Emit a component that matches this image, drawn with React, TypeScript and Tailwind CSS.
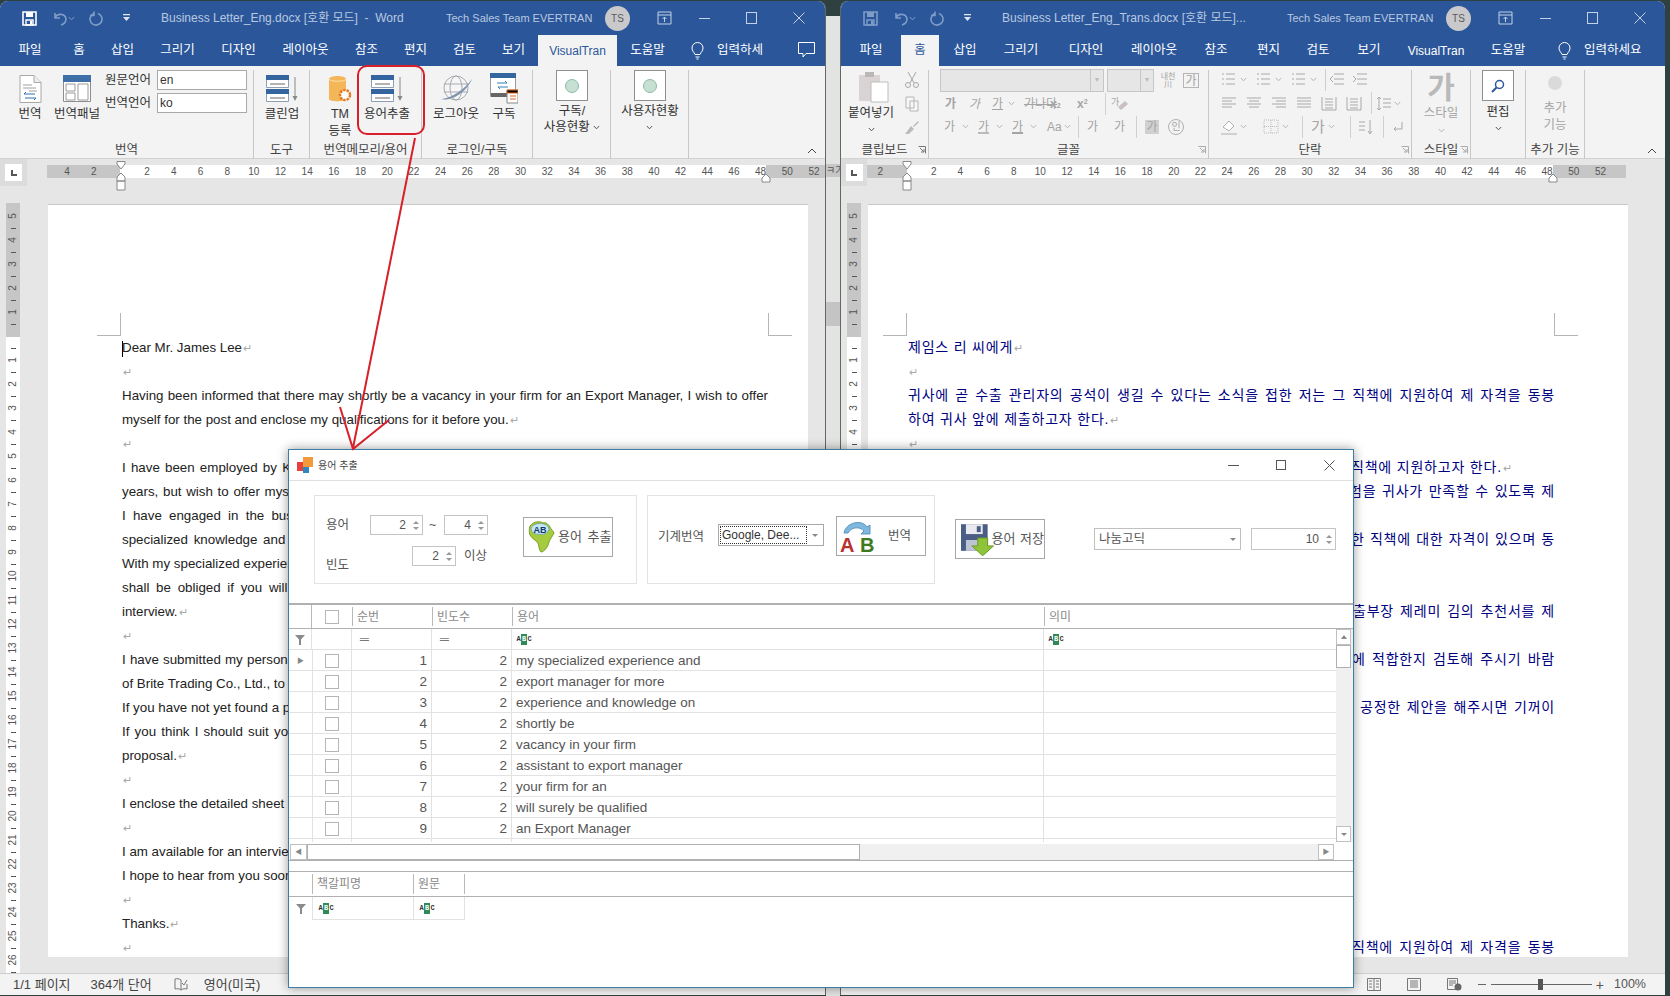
import React from "react";

const Chev = ({ c = "#555" }: { c?: string }) => (
  <svg width="7" height="5" viewBox="0 0 7 5" className="inline-block shrink-0"><path d="M.8 1 3.5 3.8 6.2 1" fill="none" stroke={c} strokeWidth="1" /></svg>
);

const SaveIcon = ({ c }: { c: string }) => (
  <svg width="15" height="15" viewBox="0 0 15 15"><path d="M1 1h13v13H1z" fill="none" stroke={c} strokeWidth="1.6" /><path d="M4 1h7v5H4z" fill={c} /><path d="M4 9h7v5H4z" fill="none" stroke={c} strokeWidth="1.4" /><path d="M8 10h2v3H8z" fill={c} /></svg>
);

function TitleBar({ title, save, titleW }: { title: string; save: string; titleW: string }) {
  const faint = "#7f9cc7";
  return (
    <div className="flex h-[34px] shrink-0 items-center text-[12px] text-[#b9c8e0]">
      <div className="flex w-[161px] shrink-0 items-center pl-[22px]">
        <SaveIcon c={save} />
        <svg className="ml-[15px]" width="16" height="15" viewBox="0 0 16 15"><path d="M3 7c2-5 10-5 11 1 0 3-2 5-5 6M3 2v5h5" fill="none" stroke={faint} strokeWidth="1.6" /></svg>
        <Chev c={faint} />
        <svg className="ml-[14px]" width="15" height="15" viewBox="0 0 15 15"><path d="M9 2.5a6 6 0 1 1-4.500.2M5 .5v4H1" fill="none" stroke={faint} strokeWidth="1.6" /></svg>
        <svg className="ml-[19px]" width="7" height="8" viewBox="0 0 7 8"><path d="M0 0h7v1.2H0zM0 3h7L3.500 7z" fill="#dfe6f2" /></svg>
      </div>
      <div className={`${titleW} shrink-0 whitespace-pre`}>{title}</div>
      <div className="w-[159px] shrink-0 whitespace-nowrap text-[11px]">Tech Sales Team EVERTRAN</div>
      <div className="flex h-[25px] w-[25px] shrink-0 items-center justify-center rounded-full bg-[#c9c9cc] text-[10px] text-[#5a5a5a]">TS</div>
      <svg className="ml-[27px]" width="15" height="14" viewBox="0 0 15 14"><path d="M1 1h13v12H1zM1 4h13M7.500 11V6M5.500 8l2-2 2 2" fill="none" stroke="#c4d1e6" /></svg>
      <div className="ml-[27px] h-px w-[11px] bg-[#c4d1e6]" />
      <div className="ml-[36px] h-[12px] w-[11px] border border-[#c4d1e6]" />
      <svg className="ml-[36px]" width="12" height="12" viewBox="0 0 12 12"><path d="M.5.5l11 11M11.500.5l-11 11" stroke="#c4d1e6" /></svg>
    </div>
  );
}

function Tabs({ tabs, active, hint, hintW, comment }: { tabs: [string, string][]; active: string; hint: string; hintW: string; comment?: boolean }) {
  return (
    <div className="flex h-[31px] shrink-0 text-[12.5px] text-white">
      {tabs.map(([t, w]) => (
        <div key={t} className={`${w} flex shrink-0 items-center justify-center ${t === "VisualTran" ? "text-[12px]" : ""} ${t === active ? "bg-[#f3f3f3] text-[#2b579a]" : ""}`}>{t}</div>
      ))}
      <div className={`${hintW} flex shrink-0 items-center justify-center`}>
        <svg width="13" height="18" viewBox="0 0 13 18"><path d="M4 12.500C3 10 1 9 1 6a5.500 5.500 0 0 1 11 0c0 3-2 4-3 6.500zM4.500 15h4M5.500 17h2" fill="none" stroke="#fff" /></svg>
        <span className="ml-[13px] whitespace-nowrap">{hint}</span>
      </div>
      {comment && (
        <svg className="ml-[10px] mt-[7px] shrink-0" width="17" height="16" viewBox="0 0 17 16"><path d="M.5.500h16v11H8l-3 3.500v-3.500H.5z" fill="none" stroke="#fff" /></svg>
      )}
    </div>
  );
}

const Big = ({ icon, label, w, top = "pt-[3px]" }: { icon: React.ReactNode; label: React.ReactNode; w: string; top?: string }) => (
  <div className={`${w} ${top} flex shrink-0 flex-col items-center text-center text-[12.5px] leading-[17px] text-[#333]`}>
    <div className="flex h-[31px] items-center justify-center">{icon}</div>
    <div className="mt-[2px] whitespace-nowrap">{label}</div>
  </div>
);

const Group = ({ w, label, children, launcher, dark = true }: { w: string; label?: string; children: React.ReactNode; launcher?: boolean; dark?: boolean }) => (
  <div className={`${w} relative flex h-[89px] shrink-0 flex-col border-r border-[#c8c8c8]`}>
    <div className="flex h-[71px] shrink-0">{children}</div>
    <div className="relative h-[18px] whitespace-nowrap text-center text-[12.5px] leading-[18px] text-[#444]">
      {label}
      {launcher && (
        <svg className="absolute right-[2px] top-[5px]" width="8" height="8" viewBox="0 0 8 8"><path d="M.5.500h7v7M2 2l4 4M6 3v3H3" fill="none" stroke={dark ? "#777" : "#aaa"} /></svg>
      )}
    </div>
  </div>
);

const DocIcon = () => (
  <svg width="23" height="28" viewBox="0 0 23 28"><path d="M1 .5h14l7 7v20H1z" fill="#fff" stroke="#a8a8a8" /><path d="M15 .5v7h7" fill="#eee" stroke="#a8a8a8" /><path d="M4 10h9M4 13h13M10 16h8" stroke="#a0a0a0" /><path d="M16 19H5l2-2M6 23h11l-2 2" fill="none" stroke="#2f6fb3" /></svg>
);
const PanelIcon = () => (
  <svg width="28" height="27" viewBox="0 0 28 27"><path d="M.5.500h27v26H.5z" fill="#fff" stroke="#8d8d8d" /><path d="M0 0h28v7H0z" fill="#3f6fa8" /><path d="M3 9h9v7H3zM15 9h10v16H15zM3 18h9v7H3z" fill="#fff" stroke="#9a9a9a" /></svg>
);
const TwoStack = () => (
  <svg width="33" height="27" viewBox="0 0 33 27"><path d="M.5.500h22v12H.5zM.5 14.500h22v12H.5z" fill="#fff" stroke="#8f9fb5" /><path d="M0 0h23v5H0zM0 14h23v5H0z" fill="#35659e" /><path d="M4 9h15M4 23h15" stroke="#666" /><path d="M29 2v21" stroke="#888" /><path d="M26.500 21h5L29 26z" fill="#888" /></svg>
);
const TMIcon = () => (
  <svg width="24" height="26" viewBox="0 0 24 26"><path d="M1 3c0-4 17-4 17 0v20c0 3-17 3-17 0z" fill="#f3b75a" /><path d="M1 3c0 3 17 3 17 0" fill="none" stroke="#fde3ae" /><circle cx="17" cy="19" r="5" fill="#fff" stroke="#e57a1f" strokeWidth="2.500" strokeDasharray="2.500 1" /></svg>
);
const GlobeIcon = () => (
  <svg width="34" height="27" viewBox="0 0 34 27"><circle cx="17" cy="13" r="12" fill="#f6f6f6" stroke="#a5a9ad" /><ellipse cx="17" cy="13" rx="6" ry="12" fill="none" stroke="#a5a9ad" /><path d="M5 9h24M5 17h24" stroke="#a5a9ad" /><path d="M1 24C12 24 26 14 33 4 28 16 14 27 1 24z" fill="#7f93ad" /></svg>
);
const SubIcon = () => (
  <svg width="28" height="31" viewBox="0 0 28 31"><path d="M.5.500h25v23H.5z" fill="#fff" stroke="#9a9a9a" /><path d="M0 0h26v5H0z" fill="#35659e" /><path d="M7 10h10l-2-2M18 14H8l2 2" fill="none" stroke="#2f7fb3" /><path d="M1 20h24v4H1z" fill="#666" /><path d="M17 17h11v13H17z" fill="#fff" stroke="#888" /><path d="M17 17h11v3H17zM20 23h6M20 26h6" stroke="#e06a1f" /></svg>
);
const RadioBox = () => (
  <div className="flex h-[31px] w-[32px] items-center justify-center border border-[#8f8f8f] bg-white">
    <div className="h-[14px] w-[14px] rounded-full border border-[#8fb9a8] bg-[#c6e0d4]" />
  </div>
);

function LeftRibbon() {
  return (
    <div className="relative flex h-[93px] shrink-0 border-b border-[#d2d2d2] bg-[#f3f3f3] pt-[4px] text-[#333]">
      <Group w="w-[254px]" label="번역">
        <Big w="w-[60px]" icon={<DocIcon />} label="번역" />
        <Big w="w-[34px]" icon={<PanelIcon />} label="번역패널" />
        <div className="ml-[11px] flex flex-col gap-[3px] text-[12.5px]">
          {[["원문언어", "en"], ["번역언어", "ko"]].map(([a, b]) => (
            <div key={a} className="flex items-center">
              <span className="w-[52px] shrink-0">{a}</span>
              <div className="flex h-[20px] w-[90px] items-center border border-[#a9a9a9] bg-white pl-[2px] text-[12px]">{b}</div>
            </div>
          ))}
        </div>
      </Group>
      <Group w="w-[56px]" label="도구"><Big w="w-[56px]" icon={<TwoStack />} label="클린업" /></Group>
      <Group w="w-[112px]" label="번역메모리/용어">
        <Big w="w-[60px]" icon={<TMIcon />} label={<>TM<br />등록</>} />
        <Big w="w-[34px]" icon={<TwoStack />} label="용어추출" />
      </Group>
      <Group w="w-[111px]" label="로그인/구독">
        <Big w="w-[68px]" icon={<GlobeIcon />} label="로그아웃" />
        <Big w="w-[28px]" icon={<SubIcon />} label="구독" />
      </Group>
      <Group w="w-[78px]"><Big w="w-[78px]" top="pt-0" icon={<RadioBox />} label={<span className="block leading-[16px]">구독/<br />사용현황 <Chev /></span>} /></Group>
      <Group w="w-[78px]"><Big w="w-[78px]" top="pt-0" icon={<RadioBox />} label={<span className="block leading-[16px]">사용자현황<br /><Chev /></span>} /></Group>
      <svg className="absolute bottom-[4px] right-[8px]" width="10" height="6" viewBox="0 0 10 6"><path d="M1 5l4-4 4 4" fill="none" stroke="#444" /></svg>
    </div>
  );
}

const G = "#a9a9a9";
const LinesI = ({ kind }: { kind: string }) => {
  const L: Record<string, string> = {
    bullet: "M1 2h2M1 7h2M1 12h2M5 2h9M5 7h9M5 12h9",
    indentL: "M5 2h10M5 7h10M5 12h10M4 4 1 7l3 3",
    indentR: "M5 2h10M5 7h10M5 12h10M1 4l3 3-3 3",
    left: "M1 2h14M1 5h10M1 8h14M1 11h10",
    center: "M1 2h14M3 5h10M1 8h14M3 11h10",
    right: "M1 2h14M5 5h10M1 8h14M5 11h10",
    just: "M1 2h14M1 5h14M1 8h14M1 11h14",
    dist: "M1 1v13h14V1M4 3h8M4 6h8M4 9h8M4 12h8",
    spacing: "M3 1v13M1 3l2-2 2 2M1 12l2 2 2-2M7 3h8M7 7h8M7 11h8",
  };
  return <svg width="16" height="15" viewBox="0 0 16 15" className="shrink-0"><path d={L[kind]} fill="none" stroke={G} /></svg>;
};
const Gl = ({ children, cl = "" }: { children: React.ReactNode; cl?: string }) => <span className={`whitespace-nowrap text-[12px] leading-none text-[#a4a4a4] ${cl}`}>{children}</span>;
const VSep = () => <div className="h-[22px] w-px shrink-0 bg-[#d0d0d0]" />;

function RightRibbon() {
  return (
    <div className="relative flex h-[93px] shrink-0 border-b border-[#d2d2d2] bg-[#f3f3f3] pt-[4px]">
      <Group w="w-[88px]" label="클립보드" launcher>
        <div className="flex w-[60px] shrink-0 flex-col items-center pt-[1px] text-[12.5px] text-[#333]">
          <svg className="ml-[6px]" width="30" height="32" viewBox="0 0 30 32"><path d="M0 4h21v26H0z" fill="#d9d3d3" /><path d="M6 1h9v5H6z" fill="#bdb6b6" /><path d="M12 11h17v20H12z" fill="#fff" stroke="#bdbdbd" /></svg>
          <div className="mt-[2px] whitespace-nowrap leading-[17px]">붙여넣기</div>
          <div className="mt-[1px] leading-none"><Chev /></div>
        </div>
        <div className="flex flex-col items-center gap-[8px] pl-[3px] pt-[2px]">
          <svg width="16" height="16" viewBox="0 0 16 16"><path d="M4 0l6 11M12 0 6 11" stroke="#a8a8a8" /><circle cx="4" cy="13" r="2.500" fill="none" stroke="#a8a8a8" /><circle cx="12" cy="13" r="2.500" fill="none" stroke="#a8a8a8" /></svg>
          <svg width="14" height="16" viewBox="0 0 14 16"><path d="M1 1h8v11H1zM5 5h8v10H5z" fill="#f7f7f7" stroke="#b5b5b5" /></svg>
          <svg width="16" height="15" viewBox="0 0 16 15"><path d="M1 14 7 6l3 3-5 5zM9 6l5-5 1 1-5 5z" fill="#bcbcbc" /></svg>
        </div>
      </Group>
      <Group w="w-[280px]" label="글꼴" launcher dark={false}>
        <div className="-mt-px flex flex-col pl-[11px]">
          <div className="flex items-center">
            <div className="flex h-[23px] w-[164px] justify-end border border-[#c6c6c6] bg-[#e6e6e6]"><div className="flex w-[13px] items-center justify-center border-l border-[#c6c6c6] text-[7px] text-[#bbb]">▼</div></div>
            <div className="ml-[3px] flex h-[23px] w-[47px] justify-end border border-[#c6c6c6] bg-[#e6e6e6]"><div className="flex w-[13px] items-center justify-center border-l border-[#c6c6c6] text-[7px] text-[#bbb]">▼</div></div>
            <span className="ml-[6px] w-[16px] text-center text-[8px] leading-[8px] text-[#a4a4a4]">내천<br />川</span>
            <span className="ml-[7px] flex h-[15px] w-[16px] items-center justify-center border border-[#b5b5b5] text-[12px] text-[#a4a4a4]">가</span>
          </div>
          <div className="flex h-[23px] items-center pl-[5px]">
            <Gl cl="w-[24px] text-[10px] font-bold">가</Gl><Gl cl="w-[23px] text-[10px] italic">가</Gl>
            <Gl cl="w-[16px] text-[11px] underline">가</Gl><Chev c="#b5b5b5" />
            <Gl cl="ml-[9px] w-[26px] text-[7px] line-through">가나다</Gl>
            <Gl cl="w-[27px] font-bold">x<span className="text-[7px]">2</span></Gl><Gl cl="w-[28px] font-bold">x<span className="align-top text-[7px]">2</span></Gl>
            <VSep />
            <svg className="ml-[5px]" width="18" height="17" viewBox="0 0 18 17"><text x="0" y="10" fontSize="9" fill="#a4a4a4">가</text><path d="M7 12l7-6 3 3-7 6z" fill="#c8c0c4" /></svg>
          </div>
          <div className="flex h-[23px] items-center pl-[4px]">
            <Gl cl="w-[18px]">가</Gl><Chev c="#b5b5b5" />
            <Gl cl="ml-[9px] w-[18px] underline decoration-[#bbb] decoration-2">가</Gl><Chev c="#b5b5b5" />
            <Gl cl="ml-[9px] w-[18px] underline decoration-2">가</Gl><Chev c="#b5b5b5" />
            <Gl cl="ml-[10px] w-[17px]">Aa</Gl><Chev c="#b5b5b5" />
            <div className="ml-[7px]"><VSep /></div>
            <Gl cl="ml-[8px] w-[27px]">가</Gl><Gl cl="w-[22px]">가</Gl>
            <VSep />
            <Gl cl="ml-[8px] flex h-[14px] w-[14px] items-center justify-center bg-[#d0d0d0]">가</Gl>
            <span className="ml-[9px] flex h-[16px] w-[16px] items-center justify-center rounded-full border border-[#b0b0b0] text-[10px] text-[#a4a4a4]">인</span>
          </div>
        </div>
      </Group>
      <Group w="w-[203px]" label="단락" launcher dark={false}>
        <div className="-mt-[2px] flex flex-col pl-[12px]">
          <div className="flex h-[23px] items-center gap-[3px]">
            <LinesI kind="bullet" /><Chev c="#b5b5b5" /><span className="w-[3px]" />
            <LinesI kind="bullet" /><Chev c="#b5b5b5" /><span className="w-[3px]" />
            <LinesI kind="bullet" /><Chev c="#b5b5b5" /><span className="w-[2px]" />
            <VSep /><LinesI kind="indentL" /><span className="w-[1px]" /><LinesI kind="indentR" />
          </div>
          <div className="flex h-[24px] items-center gap-[9px]">
            <LinesI kind="left" /><LinesI kind="center" /><LinesI kind="right" /><LinesI kind="just" /><LinesI kind="dist" /><LinesI kind="dist" />
            <VSep /><div className="-ml-[5px] flex items-center gap-[2px]"><LinesI kind="spacing" /><Chev c="#b5b5b5" /></div>
          </div>
          <div className="flex h-[23px] items-center gap-[3px]">
            <svg width="16" height="16" viewBox="0 0 16 16"><path d="M2 8l6-6 5 5-5 5z" fill="#fff" stroke="#b0b0b0" /><path d="M0 14h16v2H0z" fill="#d0d0d0" /></svg><Chev c="#b5b5b5" /><span className="w-[10px]" />
            <svg width="16" height="15" viewBox="0 0 16 15"><path d="M1 1h14v13H1zM1 7.500h14M8 1v13" fill="none" stroke="#bbb" strokeDasharray="1 1" /></svg><Chev c="#b5b5b5" /><span className="w-[7px]" />
            <VSep /><Gl cl="ml-[5px] text-[15px]">가</Gl><Chev c="#b5b5b5" /><span className="w-[9px]" />
            <VSep /><svg className="ml-[4px]" width="16" height="16" viewBox="0 0 16 16"><path d="M12 1v13M10 12l2 3 2-3M1 3h6M1 7h6M1 11h6" fill="none" stroke="#a9a9a9" /></svg><span className="w-[3px]" /><VSep />
            <svg className="ml-[5px]" width="12" height="14" viewBox="0 0 12 14"><path d="M10 2v7H2l2-2M2 9l2 2" fill="none" stroke="#a9a9a9" /></svg>
          </div>
        </div>
      </Group>
      <Group w="w-[59px]" label="스타일" launcher dark={false}>
        <div className="flex w-full flex-col items-center text-[12.5px] text-[#a4a4a4]">
          <div className="flex h-[35px] items-center text-[30px] font-bold leading-none text-[#b9b9b9]">가</div>
          <div className="leading-[17px]">스타일</div>
          <div className="mt-[2px] leading-none"><Chev c="#b5b5b5" /></div>
        </div>
      </Group>
      <Group w="w-[55px]">
        <div className="flex w-full flex-col items-center text-[12.5px] text-[#333]">
          <div className="flex h-[31px] w-[32px] items-center justify-center border border-[#8f8f8f] bg-white">
            <svg width="14" height="14" viewBox="0 0 14 14"><circle cx="8.500" cy="5.500" r="4" fill="none" stroke="#2b579a" strokeWidth="1.500" /><path d="M5.500 8.500 1 13" stroke="#2b579a" strokeWidth="2" /></svg>
          </div>
          <div className="mt-[3px] leading-[17px]">편집</div>
          <div className="mt-[1px] leading-none"><Chev /></div>
        </div>
      </Group>
      <Group w="w-[59px]" label="추가 기능">
        <div className="flex w-full flex-col items-center pt-[6px] text-[12.5px] leading-[17px] text-[#a4a4a4]">
          <div className="h-[14px] w-[14px] rounded-full bg-[#dadada]" />
          <div className="mt-[10px]">추가</div>
          <div>기능</div>
        </div>
      </Group>
      <svg className="absolute bottom-[4px] right-[8px]" width="10" height="6" viewBox="0 0 10 6"><path d="M1 5l4-4 4 4" fill="none" stroke="#444" /></svg>
    </div>
  );
}

function HRuler({ leftBoxW, marginL, w, bg, pl, ks, zeroX, endX }: { leftBoxW: string; marginL: string; w: string; bg: string; pl: string; ks: number[]; zeroX: string; endX: string }) {
  return (
    <div className="flex h-[45px] shrink-0 items-start bg-[#e6e6e6]">
      <div className={`${leftBoxW} flex h-[27px] shrink-0 items-center justify-center bg-[#dcdcdc]`}>
        <div className="flex h-[17px] w-[17px] items-center justify-center bg-white">
          <div className="h-[6px] w-[6px] border-b-2 border-l-2 border-[#555]" />
        </div>
      </div>
      <div className={`${marginL} ${w} ${bg} ${pl} relative mt-[6px] flex h-[13px] shrink-0 text-[10px] leading-[13px] text-[#555]`}>
        {ks.map((k) => (
          <div key={k} className="w-[26.68px] shrink-0 text-center">{k === 0 ? "" : Math.abs(2 * k)}</div>
        ))}
        <svg className={`absolute top-[-4px] ${zeroX}`} width="10" height="32" viewBox="0 0 10 32"><path d="M1 .5h8V3L5 8 1 3zM5 12l4 4v4H1v-4z M1 20h8v9H1z" fill="#fff" stroke="#888" /></svg>
        <svg className={`absolute top-[8px] ${endX}`} width="10" height="10" viewBox="0 0 10 10"><path d="M5 1l4 4v4H1V5z" fill="#fff" stroke="#888" /></svg>
      </div>
    </div>
  );
}

function VRuler({ cl }: { cl: string }) {
  const cells: string[] = [];
  for (let i = 5; i >= 1; i--) { cells.push(String(i), "-"); }
  cells.push("", "-");
  for (let i = 1; i <= 26; i++) { cells.push(String(i), "-"); }
  return (
    <div className={`${cl} h-[770px] w-[14px] shrink-0 overflow-hidden bg-[linear-gradient(#c6c6c6_134px,#fff_134px)] pt-[7px] text-[10px] text-[#555]`}>
      {cells.map((c, i) => (
        <div key={i} className="flex h-[12px] items-center justify-center leading-none">
          {c === "-" ? <div className="h-[5px] w-px rotate-90 bg-[#555]" /> : <span className="-rotate-90 whitespace-nowrap">{c}</span>}
        </div>
      ))}
    </div>
  );
}

const Pil = () => <span className="ml-[1px] text-[11px] text-[#a8a8a8]">↵</span>;

const leftLines: { t: string; p?: boolean; j?: boolean; ws?: string }[] = [
  { t: "Dear Mr. James Lee", p: true },
  { t: "", p: true },
  { t: "Having been informed that there may shortly be a vacancy in your firm for an Export Manager, I wish to offer", j: true },
  { t: "myself for the post and enclose my qualifications for it before you.", p: true },
  { t: "", p: true },
  { t: "I have been employed by Kim & Co. as an assistant to export manager for more than ten", ws: "[word-spacing:1.5px]" },
  { t: "years, but wish to offer myself to a larger company where I can use my experience", ws: "[word-spacing:1px]" },
  { t: "I have engaged in the business of exports and I have gained", ws: "[word-spacing:3.5px]" },
  { t: "specialized knowledge and experience on the exporting trade", ws: "[word-spacing:2px]" },
  { t: "With my specialized experience and knowledge on this trade, I will surely be qualified" },
  { t: "shall be obliged if you will give me the chance of a personal", ws: "[word-spacing:3px]" },
  { t: "interview.", p: true },
  { t: "", p: true },
  { t: "I have submitted my personal history and a recommendation letter", ws: "[word-spacing:0.5px]" },
  { t: "of Brite Trading Co., Ltd., to your office for your review" },
  { t: "If you have not yet found a proper person for this vacancy" },
  { t: "If you think I should suit your needs, please make me a fair", ws: "[word-spacing:1.5px]" },
  { t: "proposal.", p: true },
  { t: "", p: true },
  { t: "I enclose the detailed sheet of my personal history" },
  { t: "", p: true },
  { t: "I am available for an interview at your convenience" },
  { t: "I hope to hear from you soon" },
  { t: "", p: true },
  { t: "Thanks.", p: true },
  { t: "", p: true },
];

const rightLines: { t: string; p?: boolean; j?: boolean; pl?: string }[] = [
  { t: "제임스 리 씨에게", p: true },
  { t: "", p: true },
  { t: "귀사에 곧 수출 관리자의 공석이 생길 수 있다는 소식을 접한 저는 그 직책에 지원하여 제 자격을 동봉", j: true },
  { t: "하여 귀사 앞에 제출하고자 한다.", p: true },
  { t: "", p: true },
  { t: "직책에 지원하고자 한다.", p: true, pl: "pl-[443px]" },
  { t: "험을 귀사가 만족할 수 있도록 제", j: true, pl: "pl-[441px]" },
  { t: "" },
  { t: "한 직책에 대한 자격이 있으며 동", j: true, pl: "pl-[443px]" },
  { t: "" },
  { t: "" },
  { t: "출부장 제레미 김의 추천서를 제", j: true, pl: "pl-[445px]" },
  { t: "" },
  { t: "에 적합한지 검토해 주시기 바람", j: true, pl: "pl-[444px]" },
  { t: "" },
  { t: "공정한 제안을 해주시면 기꺼이", j: true, pl: "pl-[452px]" },
  ...Array.from({ length: 9 }, () => ({ t: "" })),
  { t: "직책에 지원하여 제 자격을 동봉", j: true, pl: "pl-[444px]" },
];

function PageMarks({ l, r }: { l: string; r: string }) {
  return (
    <>
      <div className={`absolute top-[108px] ${l} h-[23px] w-[24px] border-b border-r border-[#b5b5b5]`} />
      <div className={`absolute top-[108px] ${r} h-[23px] w-[24px] border-b border-l border-[#b5b5b5]`} />
    </>
  );
}

function StatusRight() {
  return (
    <div className="ml-auto flex items-center pr-[19px] text-[12.5px] text-[#555]">
      <svg width="14" height="13" viewBox="0 0 14 13"><path d="M.5.5h13v12H.5zM7 .5v12M2 3h3M2 6h3M2 9h3M9 3h3M9 6h3M9 9h3" fill="none" stroke="#777" /></svg>
      <svg className="ml-[26px]" width="14" height="13" viewBox="0 0 14 13"><path d="M.5.5h13v12H.5zM3 3h8M3 5h8M3 7h8M3 9h8" fill="none" stroke="#777" /></svg>
      <svg className="ml-[26px]" width="15" height="13" viewBox="0 0 15 13"><path d="M.5.5h10v11H.5zM2 3h7M2 5h7M2 7h4" fill="none" stroke="#777" /><circle cx="11" cy="9" r="3.500" fill="#666" /></svg>
      <div className="ml-[16px] h-px w-[8px] bg-[#666]" />
      <div className="relative ml-[5px] h-px w-[101px] bg-[#666]">
        <div className="absolute left-[47px] top-[-5px] h-[11px] w-[5px] bg-[#555]" />
      </div>
      <span className="ml-[4px] text-[14px] leading-none">+</span>
      <span className="ml-[10px]">100%</span>
    </div>
  );
}

const leftTabs: [string, string][] = [["파일", "w-[60px]"], ["홈", "w-[38px]"], ["삽입", "w-[49px]"], ["그리기", "w-[61px]"], ["디자인", "w-[61px]"], ["레이아웃", "w-[73px]"], ["참조", "w-[49px]"], ["편지", "w-[49px]"], ["검토", "w-[49px]"], ["보기", "w-[49px]"], ["VisualTran", "w-[79px]"], ["도움말", "w-[61px]"]];
const rightTabs: [string, string][] = [["파일", "w-[60px]"], ["홈", "w-[38px]"], ["삽입", "w-[52px]"], ["그리기", "w-[60px]"], ["디자인", "w-[70px]"], ["레이아웃", "w-[66px]"], ["참조", "w-[58px]"], ["편지", "w-[47px]"], ["검토", "w-[52px]"], ["보기", "w-[50px]"], ["VisualTran", "w-[84px]"], ["도움말", "w-[60px]"]];

function range(a: number, b: number) { const r: number[] = []; for (let i = a; i <= b; i++) r.push(i); return r; }

function LeftWindow() {
  return (
    <div className="absolute left-0 top-px flex h-[994px] w-[826px] flex-col overflow-hidden rounded-t-[8px] border-r border-[#666] bg-[#e6e6e6]">
      <div className="bg-[#2b579a]">
        <TitleBar title="Business Letter_Eng.docx [호환 모드]  -  Word" save="#fff" titleW="w-[285px]" />
        <Tabs tabs={leftTabs} active="VisualTran" hint="입력하세" hintW="w-[110px] !justify-start pl-[13px]" comment />
      </div>
      <LeftRibbon />
      <HRuler leftBoxW="w-[27px]" marginL="ml-[20px]" w="w-[778px]" bg="bg-[linear-gradient(to_right,#c6c6c6_73px,#fff_73px,#fff_719px,#c6c6c6_719px)]" pl="pl-[6.8px]" ks={range(-2, 26)} zeroX="left-[69px]" endX="left-[714px]" />
      <div className="flex min-h-0 flex-1">
        <VRuler cl="-mt-px ml-[6px]" />
        <div className="relative ml-[28px] h-[753px] w-[760px] shrink-0 overflow-hidden border-t border-[#c8c8c8] bg-white pl-[74px] pt-[131px] text-[13.33px] leading-[24px] text-[#222]">
          <PageMarks l="left-[49px]" r="left-[720px]" />
          <div className="absolute left-[74px] top-[136px] h-[16px] w-px bg-black" />
          {leftLines.map((l, i) => (
            <div key={i} className={`h-[24px] w-[646px] ${l.j ? "[text-align-last:justify]" : "whitespace-nowrap"} ${l.ws ?? ""}`}>
              {l.t}{l.p && <Pil />}
            </div>
          ))}
        </div>
      </div>
      <div className="flex h-[22px] shrink-0 items-center border-t border-[#cfcfcf] bg-[#f3f3f3] pl-[13px] text-[13px] text-[#444]">
        <span>1/1 페이지</span>
        <span className="ml-[20px]">364개 단어</span>
        <svg className="ml-[22px]" width="14" height="13" viewBox="0 0 14 13"><path d="M7 2C5 .5 3 .5 1 1v10c2-.5 4-.5 6 1 2-1.500 4-1.500 6-1V6M7 2v10M8 5l2 2 3-5" fill="none" stroke="#777" /></svg>
        <span className="ml-[16px]">영어(미국)</span>
      </div>
    </div>
  );
}

function RightWindow() {
  return (
    <div className="absolute left-[840px] top-px flex h-[994px] w-[825px] flex-col overflow-hidden rounded-t-[8px] border-l border-[#666] bg-[#e6e6e6]">
      <div className="bg-[#2b579a]">
        <TitleBar title="Business Letter_Eng_Trans.docx [호환 모드]..." save="#7f9cc7" titleW="w-[285px]" />
        <Tabs tabs={rightTabs} active="홈" hint="입력하세요" hintW="w-[120px] !justify-start pl-[20px]" />
      </div>
      <RightRibbon />
      <HRuler leftBoxW="w-[26px]" marginL="ml-0" w="w-[759px]" bg="bg-[linear-gradient(to_right,#c6c6c6_40px,#fff_40px,#fff_686px,#c6c6c6_686px)]" pl="pl-0" ks={range(-1, 26)} zeroX="left-[35px]" endX="left-[681px]" />
      <div className="flex min-h-0 flex-1">
        <VRuler cl="-mt-px ml-[6px]" />
        <div className="relative ml-[7px] h-[753px] w-[760px] shrink-0 overflow-hidden border-t border-[#c8c8c8] bg-white pl-[40px] pt-[130px] text-[14px] leading-[24px] tracking-[0.8px] text-[#00007f]">
          <PageMarks l="left-[15px]" r="left-[686px]" />
          {rightLines.map((l, i) => (
            <div key={i} className={`h-[24px] w-[647px] ${l.pl ?? ""} ${l.j ? "[text-align-last:justify]" : ""}`}>
              {l.t}{l.p && <Pil />}
            </div>
          ))}
        </div>
      </div>
      <div className="flex h-[22px] shrink-0 items-center border-t border-[#cfcfcf] bg-[#f3f3f3]">
        <StatusRight />
      </div>
    </div>
  );
}

const Spin = ({ v, w, h = "h-[20px]", cl = "" }: { v: string; w: string; h?: string; cl?: string }) => (
  <div className={`${w} ${h} ${cl} flex shrink-0 items-center justify-end border border-[#c4c4c4] bg-white text-[12px] text-[#555]`}>
    <span>{v}</span>
    <div className="ml-[7px] mr-[3px] flex flex-col gap-[3px]">
      <div className="h-0 w-0 border-x-[3px] border-b-[3px] border-x-transparent border-b-[#999]" />
      <div className="h-0 w-0 border-x-[3px] border-t-[3px] border-x-transparent border-t-[#999]" />
    </div>
  </div>
);

const DropTri = () => <div className="h-0 w-0 border-x-[3px] border-t-[3px] border-x-transparent border-t-[#888]" />;

const Abc = () => (
  <span className="inline-flex h-[11px] items-center font-['Liberation_Mono',monospace] text-[7px] font-bold leading-none text-[#333]">
    <span className="w-[5px] text-center">A</span>
    <span className="flex h-[11px] w-[6px] items-center justify-center bg-[#2e8b57] text-white">B</span>
    <span className="w-[5px] text-center">C</span>
  </span>
);

const Funnel = () => (
  <svg width="10" height="10" viewBox="0 0 10 10"><path d="M0 0h10L6 4.500V10H4V4.500z" fill="#8a8a8a" /></svg>
);

const Check = () => <div className="h-[14px] w-[14px] border border-[#b5b5b5] bg-white" />;

const terms = ["my specialized experience and", "export manager for more", "experience and knowledge on", "shortly be", "vacancy in your firm", "assistant to export manager", "your firm for an", "will surely be qualified", "an Export Manager", ""];

const cols = "grid grid-cols-[23px_40px_80px_80px_532px_1fr]";

function Dialog() {
  return (
    <div className="absolute left-[288px] top-[449px] flex h-[539px] w-[1066px] flex-col border border-[#3c7da6] bg-white text-[12.5px] text-[#555] shadow-[0_0_10px_rgba(0,0,0,0.4)]">
      <div className="flex h-[31px] shrink-0 items-center border-b border-[#e0e0e0]">
        <svg className="ml-[8px]" width="16" height="17" viewBox="0 0 16 17"><path d="M0 5h6v9H0z" fill="#e8413a" /><path d="M6 0h10v10H6z" fill="#f59a3a" /><path d="M6 10h6v6H6z" fill="#2f86c1" /></svg>
        <span className="ml-[5px] text-[10px] text-[#444]">용어 추출</span>
        <div className="ml-auto h-px w-[11px] bg-[#555]" />
        <div className="ml-[37px] h-[10px] w-[10px] border border-[#555]" />
        <svg className="ml-[38px] mr-[18px]" width="11" height="11" viewBox="0 0 11 11"><path d="M.5.5l10 10M10.500.5l-10 10" stroke="#555" /></svg>
      </div>
      <div className="flex h-[122px] shrink-0 items-start pt-[14px]">
        <div className="ml-[25px] flex h-[89px] w-[323px] shrink-0 border border-[#e3e3e3]">
          <div className="w-[208px] shrink-0 pl-[11px]">
            <div className="mt-[19px] flex h-[20px] items-center">
              <span className="w-[44px] shrink-0">용어</span>
              <Spin v="2" w="w-[53px]" />
              <span className="mx-[6px] w-[9px]">~</span>
              <Spin v="4" w="w-[44px]" />
            </div>
            <div className="mt-[11px] flex items-start">
              <span className="mt-[10px] w-[86px] shrink-0">빈도</span>
              <Spin v="2" w="w-[44px]" />
              <span className="ml-[8px] mt-px">이상</span>
            </div>
          </div>
          <div className="mt-[21px] flex h-[40px] w-[90px] items-center border border-[#a8a8a8] pl-[3px] text-[13px]">
            <svg width="29" height="34" viewBox="0 0 29 34"><path d="M3 6C7 1 13 1 16 3c3-1 5 1 7 4 1 3 4 4 4 6-2 4-4 6-5 9-1 5-5 10-8 10-2-2-2-6-3-9-2-3-6-4-8-8-1-3-1-6 0-9z" fill="#a5cc3f" stroke="#7f9d2a" /><ellipse cx="13" cy="9" rx="9" ry="5.500" fill="#c7e6f5" stroke="#3f7fae" strokeWidth=".5" /><text x="13" y="12.500" textAnchor="middle" fontSize="9" fontWeight="700" fill="#123a6b">AB</text></svg>
            <span className="ml-[2px] whitespace-nowrap [word-spacing:2px]">용어 추출</span>
          </div>
        </div>
        <div className="ml-[10px] flex h-[89px] w-[288px] shrink-0 border border-[#e3e3e3] pl-[10px]">
          <span className="mt-[32px] w-[60px] shrink-0">기계번역</span>
          <div className="mt-[28px] flex h-[22px] w-[106px] shrink-0 items-center border border-[#a8a8a8] p-[1px]">
            <div className="flex h-full w-[87px] items-center whitespace-nowrap border border-dotted border-[#333] pl-[1px] text-[12px] text-[#333]">Google, Dee...</div>
            <div className="flex flex-1 justify-center"><DropTri /></div>
          </div>
          <div className="ml-[12px] mt-[20px] flex h-[40px] w-[90px] shrink-0 items-center border border-[#a8a8a8] pl-[3px]">
            <svg width="34" height="34" viewBox="0 0 34 34"><path d="M4 14C6 3 22 0 27 8l3-2v9h-9l3-3C20 7 11 8 8 14z" fill="#7fb7de" stroke="#5c95bf" /><text x="0" y="33" fontSize="20" fontWeight="700" fill="#b83232">A</text><text x="20" y="33" fontSize="20" fontWeight="700" fill="#3f7a1e">B</text></svg>
            <span className="ml-[14px]">번역</span>
          </div>
        </div>
        <div className="ml-[20px] mt-[24px] flex h-[40px] w-[90px] shrink-0 items-center border border-[#a8a8a8] pl-[5px] text-[13px]">
          <svg width="34" height="33" viewBox="0 0 34 33"><path d="M0 1h27v27H0z" fill="#4a5d85" /><path d="M5 1h17v10H5z" fill="#e8eaf0" /><path d="M16 3h4v6h-4z" fill="#4a5d85" /><path d="M5 17h17v11H5z" fill="#bcc4d6" /><path d="M17 15h10v8h6L22 33 11 23h6z" fill="#8fc43a" stroke="#6d9a28" /></svg>
          <span className="ml-[-3px] whitespace-nowrap [word-spacing:1px]">용어 저장</span>
        </div>
        <div className="ml-[49px] mt-[33px] flex h-[22px] w-[147px] shrink-0 items-center justify-between border border-[#c0c0c0] px-[4px]">
          <span>나눔고딕</span><DropTri />
        </div>
        <Spin v="10" w="w-[85px]" h="h-[22px]" cl="ml-[10px] mt-[33px]" />
      </div>

      <div className={`${cols} h-[26px] shrink-0 border-b border-t-2 border-[#b0b0b0] text-[12px] text-[#8a8a8a]`}>
        <div className="border-r border-[#b8b8b8]" />
        <div className="flex items-center justify-center"><Check /></div>
        {["순번", "빈도수", "용어", "의미"].map((h) => (
          <div key={h} className="my-[2px] flex items-center border-l border-[#b8b8b8] pl-[4px]">{h}</div>
        ))}
      </div>

      <div className="flex h-[213px] shrink-0">
        <div className="min-w-0 flex-1 overflow-hidden">
          <div className={`${cols} h-[21px] border-b border-[#e2e2e2]`}>
            <div className="flex items-center justify-center border-r border-[#e2e2e2]"><Funnel /></div>
            <div className="border-r border-[#e2e2e2]" />
            <div className="border-r border-[#e2e2e2] pl-[8px] leading-[21px] text-[#777]">═</div>
            <div className="border-r border-[#e2e2e2] pl-[8px] leading-[21px] text-[#777]">═</div>
            <div className="flex items-center border-r border-[#e2e2e2] pl-[4px]"><Abc /></div>
            <div className="flex items-center pl-[4px]"><Abc /></div>
          </div>
          {terms.map((t, i) => (
            <div key={i} className={`${cols} h-[21px] border-b border-[#e2e2e2] text-[13.5px] leading-[21px] text-[#555]`}>
              <div className="flex items-center justify-center text-[7px] text-[#888]">{i === 0 ? "▶" : ""}</div>
              <div className="flex items-center justify-center border-x border-[#e2e2e2]">{i < 9 && <Check />}</div>
              <div className="border-r border-[#e2e2e2] pr-[4px] text-right">{i < 9 ? i + 1 : ""}</div>
              <div className="border-r border-[#e2e2e2] pr-[4px] text-right">{i < 9 ? 2 : ""}</div>
              <div className="whitespace-nowrap border-r border-[#e2e2e2] pl-[4px]">{t}</div>
              <div />
            </div>
          ))}
        </div>
        <div className="flex w-[17px] shrink-0 flex-col bg-[#f0f0f0] pr-[2px]">
          <div className="flex h-[16px] items-center justify-center border border-[#c0c0c0] bg-white"><div className="h-0 w-0 border-x-[3px] border-b-[4px] border-x-transparent border-b-[#888]" /></div>
          <div className="h-[23px] border border-[#b0b0b0] bg-white" />
          <div className="flex-1" />
          <div className="flex h-[16px] items-center justify-center border border-[#c0c0c0] bg-white"><DropTri /></div>
        </div>
      </div>

      <div className="mt-[2px] flex h-[16px] shrink-0 items-stretch pl-px pr-[19px]">
        <div className="flex w-[17px] items-center justify-center border border-[#c0c0c0] text-[7px] text-[#888]">◀</div>
        <div className="w-[553px] border border-[#b0b0b0] bg-white" />
        <div className="flex-1 bg-[#f0f0f0]" />
        <div className="flex w-[16px] items-center justify-center border border-[#c0c0c0] text-[7px] text-[#888]">▶</div>
      </div>
      <div className="h-[11px] shrink-0 border-t border-[#b0b0b0]" />
      <div className="flex h-[26px] shrink-0 border-y border-[#b0b0b0] text-[12px] text-[#8a8a8a]">
        <div className="w-[23px] shrink-0" />
        <div className="my-[2px] flex w-[101px] shrink-0 items-center border-l border-[#b8b8b8] pl-[4px]">책갈피명</div>
        <div className="my-[2px] flex w-[52px] shrink-0 items-center border-x border-[#b8b8b8] pl-[4px]">원문</div>
      </div>
      <div className="flex h-[23px] shrink-0">
        <div className="flex w-[23px] shrink-0 items-center justify-center"><Funnel /></div>
        <div className="flex w-[101px] shrink-0 items-center border-b border-l border-[#e2e2e2] pl-[5px]"><Abc /></div>
        <div className="flex w-[52px] shrink-0 items-center border-x border-b border-[#e2e2e2] pl-[5px]"><Abc /></div>
      </div>
    </div>
  );
}

export default function App() {
  return (
    <div className="relative h-[996px] w-[1670px] overflow-hidden bg-[#2f4040] font-['Liberation_Sans','Noto_Sans_CJK_KR',sans-serif]">
      <div className="absolute left-[826px] top-[16px] flex h-[980px] w-[14px] flex-col bg-[#e2e4e2]">
        <div className="mt-[148px] h-[13px] overflow-hidden whitespace-nowrap bg-[#c6c6c6] text-[10px] leading-[13px] text-[#555]">ㅋ가</div>
        <div className="mt-[125px] h-[24px] bg-[#c4c4c4]" />
      </div>
      <LeftWindow />
      <RightWindow />
      <Dialog />
      <div className="absolute left-[357px] top-[65px] h-[70px] w-[68px] rounded-[10px] border-2 border-[#d8202a]" />
      <svg className="absolute left-[335px] top-[135px]" width="90" height="320" viewBox="0 0 90 320">
        <path d="M80 3 18 313M5 272l13 42 36-29" fill="none" stroke="#d8202a" strokeWidth="2" />
      </svg>
    </div>
  );
}
